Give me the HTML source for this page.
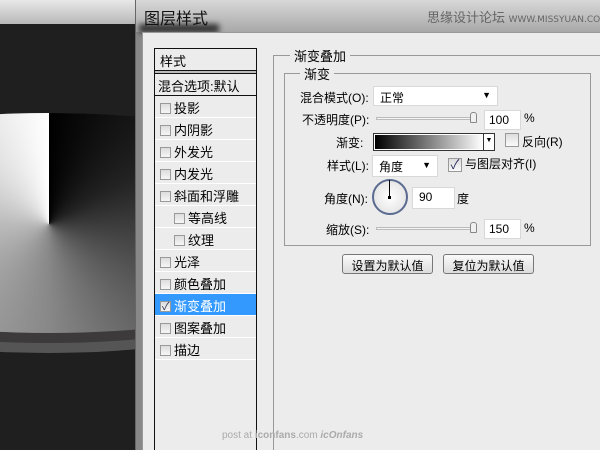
<!DOCTYPE html>
<html><head><meta charset="utf-8"><style>
*{margin:0;padding:0;box-sizing:border-box}
html,body{width:600px;height:450px;overflow:hidden}
body{position:relative;background:#1f1f1f;font-family:"Liberation Sans","Noto Sans CJK SC","WenQuanYi Zen Hei",sans-serif;font-size:12px;color:#000}
.a{position:absolute}
.lbl{position:absolute;font-size:12px;white-space:nowrap}
.cb{display:inline-block;width:11px;height:11px;border:1px solid #999;background:linear-gradient(#ddd,#f6f6f6);vertical-align:-1px;margin-right:3px}
.row{position:absolute;left:0;width:101px;height:22px;border-bottom:1px solid #fff;padding:2px 0 0 5px;font-size:13px}
.in{position:absolute;background:#fff;border:1px solid #d8d8d8;height:20px;padding:2px 0 0 6px}
.btn{position:absolute;height:20px;border:1px solid #777;border-radius:3px;background:linear-gradient(#fafafa,#dcdcdc);text-align:center;padding-top:2px;font-size:12px}
.sl{position:absolute;height:3px;border:1px solid #bbb;background:#f4f4f4}
.th{position:absolute;width:7px;height:11px;border:1px solid #888;border-radius:3px 3px 1px 1px;background:#f0f0f0}
</style></head><body>
<div class="a" style="left:0;top:0;width:135px;height:24px;background:linear-gradient(#e8e8e8,#b8b8b8)"></div>
<div class="a" style="left:-301px;top:113px;width:700px;height:240px;border-radius:50%;background:#555"></div>
<div class="a" style="left:-301px;top:113px;width:700px;height:230px;border-radius:50%;background:#3c3a3a"></div>
<div class="a" style="left:-301px;top:113px;width:700px;height:220px;border-radius:50%;background:conic-gradient(from 0deg at 350px 111px,#000 0deg,#222 60deg,#555 120deg,#888 180deg,#bbb 270deg,#fff 359.9deg)"></div>
<!-- window -->
<div class="a" style="left:135px;top:0;width:465px;height:450px;background:linear-gradient(#d8d8d8,#a8a8a8 32px,#888 32px);border-left:1px solid #666"></div>
<div class="a" style="left:139px;top:24px;width:80px;height:9px;background:#333;filter:blur(3px)"></div>
<div class="lbl" style="left:144px;top:5px;font-size:16px;color:#111">图层样式</div>
<div class="lbl" style="left:427px;top:7px;font-size:13px;color:#666">思缘设计论坛 <span style="font-size:9px;font-family:'DejaVu Sans';">WWW.MISSYUAN.COM</span></div>
<div class="a" style="left:142px;top:32px;width:458px;height:418px;background:#ececec;border-left:1px solid #999;border-top:1px solid #999"></div>
<!-- list -->
<div class="a" style="left:154px;top:48px;width:103px;height:402px;border:1px solid #111;border-bottom:none;background:#ececec">
 <div class="row" style="top:0;height:22px;border-bottom:none">样式</div>
 <div class="a" style="left:0;top:21px;width:101px;height:4px;border-top:1px solid #111;border-bottom:1px solid #111;background:#bbb"></div>
 <div class="row" style="top:25px;padding-left:3px;border-bottom:1px solid #111">混合选项:默认</div>
 <div class="row" style="top:47px"><span class="cb"></span>投影</div>
 <div class="row" style="top:69px"><span class="cb"></span>内阴影</div>
 <div class="row" style="top:91px"><span class="cb"></span>外发光</div>
 <div class="row" style="top:113px"><span class="cb"></span>内发光</div>
 <div class="row" style="top:135px"><span class="cb"></span>斜面和浮雕</div>
 <div class="row" style="top:157px;padding-left:19px"><span class="cb"></span>等高线</div>
 <div class="row" style="top:179px;padding-left:19px"><span class="cb"></span>纹理</div>
 <div class="row" style="top:201px"><span class="cb"></span>光泽</div>
 <div class="row" style="top:223px"><span class="cb"></span>颜色叠加</div>
 <div class="row" style="top:245px;background:#3399ff;color:#fff"><span class="cb" style="position:relative"><span class="a" style="left:1px;top:-4px;color:#335;font-size:11px">✓</span></span>渐变叠加</div>
 <div class="row" style="top:267px"><span class="cb"></span>图案叠加</div>
 <div class="row" style="top:289px"><span class="cb"></span>描边</div>
</div>
<!-- outer fieldset -->
<div class="a" style="left:273px;top:55px;width:340px;height:400px;border:1px solid #999"></div>
<div class="lbl" style="left:290px;top:46px;background:#ececec;padding:0 4px;font-size:13px">渐变叠加</div>
<div class="a" style="left:284px;top:73px;width:307px;height:173px;border:1px solid #999"></div>
<div class="lbl" style="left:300px;top:64px;background:#ececec;padding:0 4px;font-size:13px">渐变</div>
<div class="lbl" style="left:300px;top:89px">混合模式(O):</div>
<div class="in" style="left:373px;top:86px;width:125px">正常<span class="a" style="right:6px;top:3px;font-size:9px">▼</span></div>
<div class="lbl" style="left:302px;top:111px">不透明度(P):</div>
<div class="sl" style="left:376px;top:117px;width:100px"></div><div class="th" style="left:470px;top:112px"></div>
<div class="in" style="left:484px;top:110px;width:37px;padding-left:4px">100</div>
<div class="lbl" style="left:524px;top:111px">%</div>
<div class="lbl" style="left:336px;top:134px">渐变:</div>
<div class="a" style="left:373px;top:133px;width:122px;height:18px;border:1px solid #333;background:#fff;padding:1px">
 <div style="width:108px;height:14px;background:linear-gradient(90deg,#000,#fff)"></div>
 <div class="a" style="right:0;top:0;width:11px;height:16px;border-left:1px solid #333;font-size:7px;text-align:center;padding-top:3px">▼</div></div>
<div class="a" style="left:505px;top:133px;width:14px;height:14px;border:1px solid #999;background:linear-gradient(#ddd,#fafafa)"></div>
<div class="lbl" style="left:522px;top:133px">反向(R)</div>
<div class="lbl" style="left:327px;top:157px">样式(L):</div>
<div class="in" style="left:372px;top:155px;width:66px;height:22px">角度<span class="a" style="right:6px;top:4px;font-size:9px">▼</span></div>
<div class="a" style="left:448px;top:158px;width:14px;height:14px;border:1px solid #999;background:linear-gradient(#ddd,#fafafa);color:#336;font-size:13px;line-height:12px;text-align:center">✓</div>
<div class="lbl" style="left:465px;top:155px">与图层对齐(I)</div>
<div class="lbl" style="left:324px;top:190px">角度(N):</div>
<div class="a" style="left:372px;top:179px;width:36px;height:36px;border-radius:50%;border:2px solid #5a6a90;background:radial-gradient(#fff,#ddd)"></div>
<div class="a" style="left:389px;top:180px;width:1px;height:17px;background:#000"></div>
<div class="a" style="left:388px;top:196px;width:3px;height:3px;background:#000"></div>
<div class="in" style="left:412px;top:187px;width:43px;height:22px">90</div>
<div class="lbl" style="left:457px;top:190px">度</div>
<div class="lbl" style="left:326px;top:221px">缩放(S):</div>
<div class="sl" style="left:376px;top:227px;width:100px"></div><div class="th" style="left:470px;top:222px"></div>
<div class="in" style="left:484px;top:219px;width:37px;padding-left:4px">150</div>
<div class="lbl" style="left:524px;top:221px">%</div>
<div class="btn" style="left:342px;top:254px;width:91px">设置为默认值</div>
<div class="btn" style="left:443px;top:254px;width:91px">复位为默认值</div>
<div class="lbl" style="left:222px;top:430px;color:#aaa;font-size:10px">post at <b>iconfans</b>.com <i><b>icOnfans</b></i></div>
</body></html>
